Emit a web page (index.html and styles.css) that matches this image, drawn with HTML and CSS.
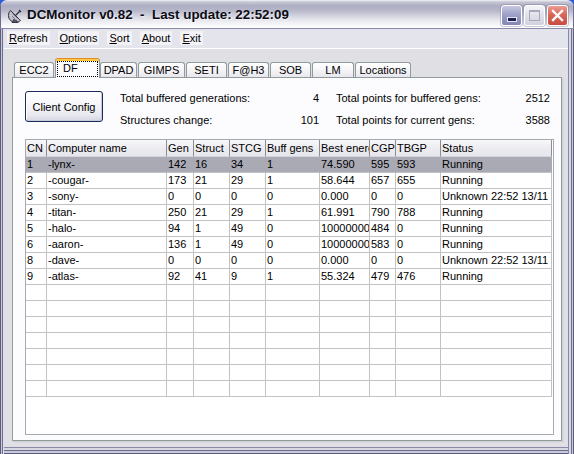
FILE: index.html
```html
<!DOCTYPE html>
<html>
<head>
<meta charset="utf-8">
<title>DCMonitor</title>
<link rel="stylesheet" href="styles.css">
</head>
<body>
<div class="window">
  <div class="titlebar">
    <svg class="app-icon" viewBox="0 0 16 16" width="16" height="16">
      <path d="M2.5 3.5 L12.5 13.5 A7 7 0 0 1 2.5 3.5 Z" fill="#c3c3cc" stroke="#2e2e3c" stroke-width="1"/>
      <path d="M4.5 6.5 L9.5 11.5 M4 9 L7 12" stroke="#7a7a88" stroke-width="1"/>
      <path d="M7.5 8.5 L12 4 M11 3 L13 5" stroke="#2e2e3c" stroke-width="1.2"/>
      <path d="M6 12 L4 15.5 H10 L8 13" fill="#55556a" stroke="#2e2e3c" stroke-width="0.8"/>
    </svg>
    <span class="title">DCMonitor v0.82  -  Last update: 22:52:09</span>
    <div class="caption">
      <span class="cbtn cmin"><span class="min-glyph"></span></span>
      <span class="cbtn cmax"><span class="max-glyph"></span></span>
      <span class="cbtn cclose"><svg viewBox="0 0 21 21" width="21" height="21"><path d="M6 6 L15 15 M15 6 L6 15" stroke="#ffffff" stroke-width="2.3" stroke-linecap="square"/></svg></span>
    </div>
  </div>
  <div class="frame">
    <div class="menubar">
      <span class="mi"><u>R</u>efresh</span>
      <span class="mi"><u>O</u>ptions</span>
      <span class="mi"><u>S</u>ort</span>
      <span class="mi"><u>A</u>bout</span>
      <span class="mi"><u>E</u>xit</span>
    </div>
    <div class="client">
      <div class="tabs">
        <span class="tab t-ecc2">ECC2</span>
        <span class="tab tab-sel"><span class="focus">DF</span></span>
        <span class="tab t-dpad">DPAD</span>
        <span class="tab t-gimps">GIMPS</span>
        <span class="tab t-seti">SETI</span>
        <span class="tab t-fah">F@H3</span>
        <span class="tab t-sob">SOB</span>
        <span class="tab t-lm">LM</span>
        <span class="tab t-loc">Locations</span>
      </div>
      <div class="panel">
        <div class="top">
          <button class="btn">Client Config</button>
          <div class="stats">
            <span>Total buffered generations:</span><span class="num">4</span>
            <span class="lab2">Total points for buffered gens:</span><span class="num">2512</span>
            <span>Structures change:</span><span class="num">101</span>
            <span class="lab2">Total points for current gens:</span><span class="num">3588</span>
          </div>
        </div>
        <div class="listview">
          <div class="lv-row lv-head">
            <span class="hc">CN</span><span class="hc">Computer name</span><span class="hc">Gen</span><span class="hc">Struct</span><span class="hc">STCG</span><span class="hc">Buff gens</span><span class="hc">Best energy</span><span class="hc">CGP</span><span class="hc">TBGP</span><span class="hc">Status</span>
          </div>
          <div class="lv-row sel">
            <span class="c">1</span><span class="c">-lynx-</span><span class="c">142</span><span class="c">16</span><span class="c">34</span><span class="c">1</span><span class="c">74.590</span><span class="c">595</span><span class="c">593</span><span class="c">Running</span>
          </div>
          <div class="lv-row">
            <span class="c">2</span><span class="c">-cougar-</span><span class="c">173</span><span class="c">21</span><span class="c">29</span><span class="c">1</span><span class="c">58.644</span><span class="c">657</span><span class="c">655</span><span class="c">Running</span>
          </div>
          <div class="lv-row">
            <span class="c">3</span><span class="c">-sony-</span><span class="c">0</span><span class="c">0</span><span class="c">0</span><span class="c">0</span><span class="c">0.000</span><span class="c">0</span><span class="c">0</span><span class="c">Unknown 22:52 13/11</span>
          </div>
          <div class="lv-row">
            <span class="c">4</span><span class="c">-titan-</span><span class="c">250</span><span class="c">21</span><span class="c">29</span><span class="c">1</span><span class="c">61.991</span><span class="c">790</span><span class="c">788</span><span class="c">Running</span>
          </div>
          <div class="lv-row">
            <span class="c">5</span><span class="c">-halo-</span><span class="c">94</span><span class="c">1</span><span class="c">49</span><span class="c">0</span><span class="c">10000000</span><span class="c">484</span><span class="c">0</span><span class="c">Running</span>
          </div>
          <div class="lv-row">
            <span class="c">6</span><span class="c">-aaron-</span><span class="c">136</span><span class="c">1</span><span class="c">49</span><span class="c">0</span><span class="c">10000000</span><span class="c">583</span><span class="c">0</span><span class="c">Running</span>
          </div>
          <div class="lv-row">
            <span class="c">8</span><span class="c">-dave-</span><span class="c">0</span><span class="c">0</span><span class="c">0</span><span class="c">0</span><span class="c">0.000</span><span class="c">0</span><span class="c">0</span><span class="c">Unknown 22:52 13/11</span>
          </div>
          <div class="lv-row">
            <span class="c">9</span><span class="c">-atlas-</span><span class="c">92</span><span class="c">41</span><span class="c">9</span><span class="c">1</span><span class="c">55.324</span><span class="c">479</span><span class="c">476</span><span class="c">Running</span>
          </div>
          <div class="lv-row"><span class="c"></span><span class="c"></span><span class="c"></span><span class="c"></span><span class="c"></span><span class="c"></span><span class="c"></span><span class="c"></span><span class="c"></span><span class="c"></span></div>
          <div class="lv-row"><span class="c"></span><span class="c"></span><span class="c"></span><span class="c"></span><span class="c"></span><span class="c"></span><span class="c"></span><span class="c"></span><span class="c"></span><span class="c"></span></div>
          <div class="lv-row"><span class="c"></span><span class="c"></span><span class="c"></span><span class="c"></span><span class="c"></span><span class="c"></span><span class="c"></span><span class="c"></span><span class="c"></span><span class="c"></span></div>
          <div class="lv-row"><span class="c"></span><span class="c"></span><span class="c"></span><span class="c"></span><span class="c"></span><span class="c"></span><span class="c"></span><span class="c"></span><span class="c"></span><span class="c"></span></div>
          <div class="lv-row"><span class="c"></span><span class="c"></span><span class="c"></span><span class="c"></span><span class="c"></span><span class="c"></span><span class="c"></span><span class="c"></span><span class="c"></span><span class="c"></span></div>
          <div class="lv-row"><span class="c"></span><span class="c"></span><span class="c"></span><span class="c"></span><span class="c"></span><span class="c"></span><span class="c"></span><span class="c"></span><span class="c"></span><span class="c"></span></div>
          <div class="lv-row"><span class="c"></span><span class="c"></span><span class="c"></span><span class="c"></span><span class="c"></span><span class="c"></span><span class="c"></span><span class="c"></span><span class="c"></span><span class="c"></span></div>
        </div>
      </div>
    </div>
  </div>
</div>
</body>
</html>
```

FILE: styles.css
```css
* { box-sizing: border-box; }

html, body {
  margin: 0;
  padding: 0;
}

body {
  width: 574px;
  height: 454px;
  overflow: hidden;
  background: #2a5cd6;
  font-family: "Liberation Sans", Arial, sans-serif;
  font-size: 11px;
  color: #000;
}

.window {
  width: 574px;
  height: 454px;
  display: flex;
  flex-direction: column;
  border-radius: 7px 7px 0 0;
  overflow: hidden;
}

/* ---------- title bar ---------- */
.titlebar {
  flex: none;
  height: 29px;
  display: flex;
  align-items: center;
  padding: 1px 6px 0 8px;
  background: linear-gradient(to bottom,
    #f2f2f7 0px, #c6c6d5 2px, #adadc3 6px, #b9b9cc 11px,
    #d9d9e4 17px, #eeeef3 22px, #fafafc 26px, #ffffff 28px);
  border-bottom: 1px solid #8a8aa6;
  box-shadow: inset 1px 0 #6c6c8e, inset -1px 0 #6c6c8e;
}

.app-icon {
  flex: none;
  width: 16px;
  height: 16px;
  margin-right: 3px;
}

.title {
  flex: 1;
  white-space: pre;
  font-weight: bold;
  font-size: 13.4px;
  line-height: 16px;
  color: #0c0c14;
  text-shadow: 1px 1px 0 rgba(255, 255, 255, 0.5);
}

.caption {
  display: flex;
  gap: 2px;
  align-self: flex-start;
  margin-top: 4px;
}

.cbtn {
  width: 21px;
  height: 21px;
  border: 1px solid #ffffff;
  border-radius: 3px;
  position: relative;
  display: block;
  box-shadow: 0 0 0 1px rgba(110, 110, 140, 0.35);
}

.cmin {
  background: linear-gradient(to bottom, #c6c8e0 0%, #9ea1c8 45%, #8386b4 100%);
}

.min-glyph {
  position: absolute;
  left: 6px;
  top: 12px;
  width: 8px;
  height: 3px;
  background: #1e2050;
  box-shadow: 0 0 0 1px #e6e6f2;
}

.cmax {
  background: linear-gradient(to bottom, #f4f4f8 0%, #e0e0ea 50%, #d2d2de 100%);
}

.max-glyph {
  position: absolute;
  left: 4px;
  top: 4px;
  width: 11px;
  height: 11px;
  border: 1px solid #a8a8bc;
  border-top-width: 2px;
}

.cclose {
  background: linear-gradient(to bottom, #ec9d92 0%, #d9665a 45%, #c84c3f 100%);
}

.cclose svg {
  position: absolute;
  left: -1px;
  top: -1px;
}

/* ---------- frame ---------- */
.frame {
  flex: 1;
  display: flex;
  flex-direction: column;
  padding: 0 6px 7px 4px;
  background: #e0dfe3;
  box-shadow:
    inset 1px 0 #5c5c80, inset 2px 0 #c8c8d6, inset 3px 0 #6e6e92, inset 4px 0 #dfdfe8,
    inset -1px 0 #5c5c80, inset -2px 0 #c8c8d6, inset -3px 0 #6e6e92, inset -5px 0 #d8d8e2, inset -6px 0 #8a8aa8,
    inset 0 -1px #5c5c80, inset 0 -3px #c8c8d6, inset 0 -4px #6e6e92, inset 0 -6px #d8d8e2, inset 0 -7px #8a8aa8;
}

/* ---------- menu ---------- */
.menubar {
  flex: none;
  height: 20px;
  display: flex;
  align-items: center;
  gap: 8px;
  padding: 0 0 1px 3px;
  background: #e4e4ec;
  border-bottom: 1px solid #ffffff;
}

.mi {
  padding: 0 2px;
  line-height: 14px;
  background: #f3f3f7;
}

.mi u {
  text-decoration: underline;
}

/* ---------- client ---------- */
.client {
  flex: 1;
  display: flex;
  flex-direction: column;
  padding: 9px 6px 6px 8px;
}

.tabs {
  flex: none;
  height: 20px;
  margin-bottom: -1px;
  display: flex;
  align-items: flex-end;
  padding-left: 2px;
}

.tab {
  height: 15px;
  margin: 0 1px 1px 0;
  border: 1px solid #919b9c;
  border-bottom: none;
  border-radius: 3px 3px 0 0;
  background: linear-gradient(to bottom, #ffffff 0%, #f6f6f9 45%, #e7e7ee 100%);
  text-align: center;
  line-height: 14px;
  white-space: nowrap;
}

.t-ecc2 { width: 40px; }
.t-dpad { width: 37px; }
.t-gimps { width: 47px; }
.t-seti { width: 41px; }
.t-fah { width: 41px; }
.t-sob { width: 41px; }
.t-lm { width: 42px; }
.t-loc { width: 56px; }

.tab-sel {
  width: 45px;
  height: 20px;
  margin: 0;
  position: relative;
  z-index: 1;
  background: #fcfcfe;
  border-top: 1px solid #e68b2c;
  box-shadow: inset 0 2px 0 #ffc83c;
  text-align: left;
}

.focus {
  display: block;
  margin: 2px 1px 0 1px;
  height: 16px;
  border: 1px dotted #000;
  padding-left: 5px;
  line-height: 13px;
}

.panel {
  flex: 1;
  display: flex;
  flex-direction: column;
  border: 1px solid #919b9c;
  background: #fcfcfe;
  padding: 13px 7px 5px 12px;
  box-shadow: 1px 1px 0 #cfcfd8, 2px 2px 0 #d9d9e0;
}

.top {
  flex: none;
  display: flex;
  align-items: flex-start;
}

.btn {
  flex: none;
  width: 78px;
  height: 31px;
  padding: 0;
  margin: 0;
  border: 1px solid #1c2a5e;
  border-radius: 3px;
  background: linear-gradient(to bottom, #ffffff 0%, #f7f7fa 40%, #e8e8ef 80%, #d6d6e2 100%);
  box-shadow: inset -1px -1px 0 #c8c8d6, inset 1px 1px 0 #ffffff;
  font-family: "Liberation Sans", Arial, sans-serif;
  font-size: 11px;
  color: #000;
}

.stats {
  margin-left: 17px;
  display: grid;
  grid-template-columns: 170px 29px 197px 34px;
  row-gap: 8px;
  line-height: 14px;
}

.stats .num {
  text-align: right;
}

.stats .lab2 {
  padding-left: 17px;
}

/* ---------- list view ---------- */
.listview {
  flex: 1;
  margin-top: 12px;
  border: 1px solid #a3aab0;
  background: #ffffff;
  overflow: hidden;
}

.lv-row {
  display: grid;
  grid-template-columns: 21px 120px 27px 36px 36px 54px 50px 26px 45px 111px;
  height: 16px;
}

.c, .hc {
  overflow: hidden;
  white-space: nowrap;
  padding-left: 1px;
}

.c {
  border-right: 1px solid #c2c2c2;
  border-bottom: 1px solid #c2c2c2;
  line-height: 15px;
}

.lv-head {
  height: 17px;
}

.hc {
  line-height: 16px;
  background: linear-gradient(to bottom, #f8f8fa 0%, #ececf1 50%, #e6e6ec 100%);
  border-right: 1px solid #8c8c98;
  border-bottom: 1px solid #d4d4dc;
}

.lv-row.sel .c {
  background: #aaaab5;
  border-right-color: #aaaab5;
}
```
